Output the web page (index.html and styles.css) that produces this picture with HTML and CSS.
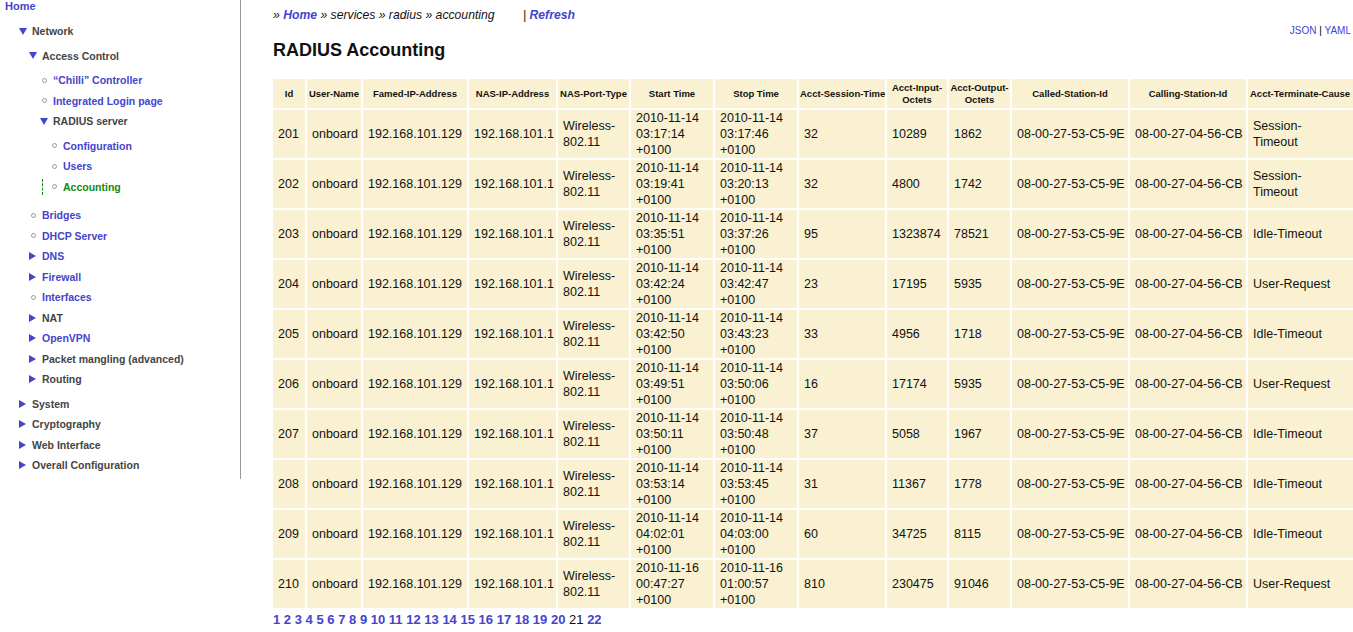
FILE: index.html
```html
<!DOCTYPE html>
<html>
<head>
<meta charset="utf-8">
<title>RADIUS Accounting</title>
<link rel="stylesheet" href="styles.css">
</head>
<body>
<div class="page">
  <nav class="sidebar">
    <a class="home" href="#">Home</a>
    <ul class="tree l1">
      <li>
        <div class="item"><span class="mk"><svg class="tri" width="8" height="7" viewBox="0 0 8 7"><polygon points="0,0 8,0 4,7"/></svg></span><span class="lbl">Network</span></div>
        <ul class="tree">
          <li>
            <div class="item"><span class="mk"><svg class="tri" width="8" height="7" viewBox="0 0 8 7"><polygon points="0,0 8,0 4,7"/></svg></span><span class="lbl">Access Control</span></div>
            <ul class="tree l3">
              <li><div class="item"><span class="mk"><span class="dot"></span></span><a href="#">“Chilli” Controller</a></div></li>
              <li><div class="item"><span class="mk"><span class="dot"></span></span><a href="#">Integrated Login page</a></div></li>
              <li>
                <div class="item"><span class="mk"><svg class="tri" width="8" height="7" viewBox="0 0 8 7"><polygon points="0,0 8,0 4,7"/></svg></span><span class="lbl">RADIUS server</span></div>
                <ul class="tree">
                  <li><div class="item"><span class="mk"><span class="dot"></span></span><a href="#">Configuration</a></div></li>
                  <li><div class="item"><span class="mk"><span class="dot"></span></span><a href="#">Users</a></div></li>
                  <li><div class="item current"><span class="mk"><span class="dot"></span></span><a href="#" class="cur">Accounting</a></div></li>
                </ul>
              </li>
            </ul>
          </li>
          <li><div class="item"><span class="mk"><span class="dot"></span></span><a href="#">Bridges</a></div></li>
          <li><div class="item"><span class="mk"><span class="dot"></span></span><a href="#">DHCP Server</a></div></li>
          <li><div class="item"><span class="mk"><svg class="tri" width="7" height="8" viewBox="0 0 7 8"><polygon points="0,0 7,4 0,8"/></svg></span><a href="#">DNS</a></div></li>
          <li><div class="item"><span class="mk"><svg class="tri" width="7" height="8" viewBox="0 0 7 8"><polygon points="0,0 7,4 0,8"/></svg></span><a href="#">Firewall</a></div></li>
          <li><div class="item"><span class="mk"><span class="dot"></span></span><a href="#">Interfaces</a></div></li>
          <li><div class="item"><span class="mk"><svg class="tri" width="7" height="8" viewBox="0 0 7 8"><polygon points="0,0 7,4 0,8"/></svg></span><span class="lbl">NAT</span></div></li>
          <li><div class="item"><span class="mk"><svg class="tri" width="7" height="8" viewBox="0 0 7 8"><polygon points="0,0 7,4 0,8"/></svg></span><a href="#">OpenVPN</a></div></li>
          <li><div class="item"><span class="mk"><svg class="tri" width="7" height="8" viewBox="0 0 7 8"><polygon points="0,0 7,4 0,8"/></svg></span><span class="lbl">Packet mangling (advanced)</span></div></li>
          <li><div class="item"><span class="mk"><svg class="tri" width="7" height="8" viewBox="0 0 7 8"><polygon points="0,0 7,4 0,8"/></svg></span><span class="lbl">Routing</span></div></li>
        </ul>
      </li>
      <li><div class="item"><span class="mk"><svg class="tri" width="7" height="8" viewBox="0 0 7 8"><polygon points="0,0 7,4 0,8"/></svg></span><span class="lbl">System</span></div></li>
      <li><div class="item"><span class="mk"><svg class="tri" width="7" height="8" viewBox="0 0 7 8"><polygon points="0,0 7,4 0,8"/></svg></span><span class="lbl">Cryptography</span></div></li>
      <li><div class="item"><span class="mk"><svg class="tri" width="7" height="8" viewBox="0 0 7 8"><polygon points="0,0 7,4 0,8"/></svg></span><span class="lbl">Web Interface</span></div></li>
      <li><div class="item"><span class="mk"><svg class="tri" width="7" height="8" viewBox="0 0 7 8"><polygon points="0,0 7,4 0,8"/></svg></span><span class="lbl">Overall Configuration</span></div></li>
    </ul>
  </nav>

  <main class="main">
    <div class="crumbs"><span class="raquo">»</span> <a href="#">Home</a> <span class="raquo">»</span> services <span class="raquo">»</span> radius <span class="raquo">»</span> accounting <span class="refresh">| <a href="#">Refresh</a></span></div>
    <div class="formats"><a href="#">JSON</a> <span class="bar">|</span> <a href="#">YAML</a></div>
    <h1 class="title">RADIUS Accounting</h1>

    <table class="acct">
      <colgroup>
        <col class="c-id"><col class="c-user"><col class="c-fip"><col class="c-nip"><col class="c-port"><col class="c-time"><col class="c-time"><col class="c-sess"><col class="c-in"><col class="c-out"><col class="c-sta"><col class="c-sta"><col class="c-cause">
      </colgroup>
      <thead>
        <tr>
          <th>Id</th><th>User-Name</th><th>Famed-IP-Address</th><th>NAS-IP-Address</th><th>NAS-Port-Type</th><th>Start Time</th><th>Stop Time</th><th>Acct-Session-Time</th><th>Acct-Input-<br>Octets</th><th>Acct-Output-<br>Octets</th><th>Called-Station-Id</th><th>Calling-Station-Id</th><th class="left">Acct-Terminate-Cause</th>
        </tr>
      </thead>
      <tbody>
        <tr><td>201</td><td>onboard</td><td>192.168.101.129</td><td>192.168.101.1</td><td>Wireless-802.11</td><td>2010-11-14 03:17:14 +0100</td><td>2010-11-14 03:17:46 +0100</td><td>32</td><td>10289</td><td>1862</td><td class="sta">08-00-27-53-C5-9E</td><td class="sta">08-00-27-04-56-CB</td><td class="cause">Session-Timeout</td></tr>
        <tr><td>202</td><td>onboard</td><td>192.168.101.129</td><td>192.168.101.1</td><td>Wireless-802.11</td><td>2010-11-14 03:19:41 +0100</td><td>2010-11-14 03:20:13 +0100</td><td>32</td><td>4800</td><td>1742</td><td class="sta">08-00-27-53-C5-9E</td><td class="sta">08-00-27-04-56-CB</td><td class="cause">Session-Timeout</td></tr>
        <tr><td>203</td><td>onboard</td><td>192.168.101.129</td><td>192.168.101.1</td><td>Wireless-802.11</td><td>2010-11-14 03:35:51 +0100</td><td>2010-11-14 03:37:26 +0100</td><td>95</td><td>1323874</td><td>78521</td><td class="sta">08-00-27-53-C5-9E</td><td class="sta">08-00-27-04-56-CB</td><td class="cause">Idle-Timeout</td></tr>
        <tr><td>204</td><td>onboard</td><td>192.168.101.129</td><td>192.168.101.1</td><td>Wireless-802.11</td><td>2010-11-14 03:42:24 +0100</td><td>2010-11-14 03:42:47 +0100</td><td>23</td><td>17195</td><td>5935</td><td class="sta">08-00-27-53-C5-9E</td><td class="sta">08-00-27-04-56-CB</td><td class="cause">User-Request</td></tr>
        <tr><td>205</td><td>onboard</td><td>192.168.101.129</td><td>192.168.101.1</td><td>Wireless-802.11</td><td>2010-11-14 03:42:50 +0100</td><td>2010-11-14 03:43:23 +0100</td><td>33</td><td>4956</td><td>1718</td><td class="sta">08-00-27-53-C5-9E</td><td class="sta">08-00-27-04-56-CB</td><td class="cause">Idle-Timeout</td></tr>
        <tr><td>206</td><td>onboard</td><td>192.168.101.129</td><td>192.168.101.1</td><td>Wireless-802.11</td><td>2010-11-14 03:49:51 +0100</td><td>2010-11-14 03:50:06 +0100</td><td>16</td><td>17174</td><td>5935</td><td class="sta">08-00-27-53-C5-9E</td><td class="sta">08-00-27-04-56-CB</td><td class="cause">User-Request</td></tr>
        <tr><td>207</td><td>onboard</td><td>192.168.101.129</td><td>192.168.101.1</td><td>Wireless-802.11</td><td>2010-11-14 03:50:11 +0100</td><td>2010-11-14 03:50:48 +0100</td><td>37</td><td>5058</td><td>1967</td><td class="sta">08-00-27-53-C5-9E</td><td class="sta">08-00-27-04-56-CB</td><td class="cause">Idle-Timeout</td></tr>
        <tr><td>208</td><td>onboard</td><td>192.168.101.129</td><td>192.168.101.1</td><td>Wireless-802.11</td><td>2010-11-14 03:53:14 +0100</td><td>2010-11-14 03:53:45 +0100</td><td>31</td><td>11367</td><td>1778</td><td class="sta">08-00-27-53-C5-9E</td><td class="sta">08-00-27-04-56-CB</td><td class="cause">Idle-Timeout</td></tr>
        <tr><td>209</td><td>onboard</td><td>192.168.101.129</td><td>192.168.101.1</td><td>Wireless-802.11</td><td>2010-11-14 04:02:01 +0100</td><td>2010-11-14 04:03:00 +0100</td><td>60</td><td>34725</td><td>8115</td><td class="sta">08-00-27-53-C5-9E</td><td class="sta">08-00-27-04-56-CB</td><td class="cause">Idle-Timeout</td></tr>
        <tr><td>210</td><td>onboard</td><td>192.168.101.129</td><td>192.168.101.1</td><td>Wireless-802.11</td><td>2010-11-16 00:47:27 +0100</td><td>2010-11-16 01:00:57 +0100</td><td>810</td><td>230475</td><td>91046</td><td class="sta">08-00-27-53-C5-9E</td><td class="sta">08-00-27-04-56-CB</td><td class="cause">User-Request</td></tr>
      </tbody>
    </table>

    <div class="pager"><a href="#">1</a> <a href="#">2</a> <a href="#">3</a> <a href="#">4</a> <a href="#">5</a> <a href="#">6</a> <a href="#">7</a> <a href="#">8</a> <a href="#">9</a> <a href="#">10</a> <a href="#">11</a> <a href="#">12</a> <a href="#">13</a> <a href="#">14</a> <a href="#">15</a> <a href="#">16</a> <a href="#">17</a> <a href="#">18</a> <a href="#">19</a> <a href="#">20</a> <span class="curpage">21</span> <a href="#">22</a></div>
  </main>
</div>
</body>
</html>
```

FILE: styles.css
```css
html, body {
  margin: 0;
  padding: 0;
  background: #fff;
  overflow: hidden;
}
body {
  font-family: "Liberation Sans", Arial, sans-serif;
  color: #111;
}
a {
  color: #4444cc;
  text-decoration: none;
}

.page {
  display: flex;
  align-items: flex-start;
}

/* ---------- sidebar ---------- */
.sidebar {
  flex: 0 0 241px;
  width: 241px;
  box-sizing: border-box;
  border-right: 1px solid #999;
  padding: 0 0 0 5px;
  font-size: 10.5px;
  font-weight: bold;
}
.home {
  display: block;
  line-height: 13px;
  font-size: 11px;
}
.tree {
  list-style: none;
  margin: 0;
  padding: 4px 0 4px 10px;
}
.tree.l1 {
  padding: 8px 0 3px 14px;
}
.tree.l3 {
  padding-left: 11px;
}
.item {
  display: flex;
  align-items: center;
  height: 20.5px;
  white-space: nowrap;
}
.item.current {
  position: relative;
}
.item.current::before {
  content: "";
  position: absolute;
  left: -8px;
  top: 2px;
  bottom: 2px;
  border-left: 1px dashed #118811;
}
.mk {
  flex: 0 0 13px;
  width: 13px;
  display: flex;
  align-items: center;
}
.tri {
  fill: #4444cc;
  display: block;
}
.dot {
  display: block;
  width: 3px;
  height: 3px;
  border: 1px solid #999;
  border-radius: 50%;
  margin-left: 2px;
}
.lbl {
  color: #444;
}
a.cur {
  color: #118811;
}

/* ---------- main ---------- */
.main {
  flex: 1 1 auto;
  min-width: 0;
  overflow: hidden;
  padding: 7px 2px 0 32px;
}
.crumbs {
  font-size: 12.2px;
  font-style: italic;
  line-height: 16px;
  white-space: nowrap;
}
.crumbs a {
  font-weight: bold;
}
.refresh {
  margin-left: 25px;
  color: #111;
}
.formats {
  text-align: right;
  font-size: 10px;
  line-height: 12px;
  margin-top: 2px;
}
.formats .bar {
  color: #000;
}
.title {
  font-size: 18px;
  line-height: 22px;
  font-weight: bold;
  margin: 2px 0 16px;
  color: #111;
}

/* ---------- table ---------- */
.acct {
  table-layout: fixed;
  width: 1089px;
  border-collapse: separate;
  border-spacing: 2px;
  margin-left: -2px;
}
.c-id { width: 32px; }
.c-user { width: 54px; }
.c-fip { width: 104px; }
.c-nip { width: 87px; }
.c-port { width: 71px; }
.c-time { width: 82px; }
.c-sess { width: 86px; }
.c-in { width: 60px; }
.c-out { width: 61px; }
.c-sta { width: 116px; }
.c-cause { width: 110px; }

.acct th,
.acct td {
  background: #f9f1d1;
  box-sizing: border-box;
}
.acct th {
  font-size: 9.5px;
  font-weight: bold;
  line-height: 12px;
  padding: 3px 1px 2px;
  text-align: center;
  vertical-align: middle;
  white-space: nowrap;
  color: #111;
}
.acct th.left {
  text-align: left;
  padding-left: 2px;
}
.acct td {
  font-size: 12.5px;
  line-height: 16px;
  height: 48px;
  padding: 0 4px 0 5px;
  vertical-align: middle;
  text-align: left;
}
.acct td.sta {
  white-space: nowrap;
}
.acct td.cause {
  padding-right: 20px;
}

.pager {
  font-size: 13px;
  font-weight: bold;
  line-height: 16px;
  padding-top: 2px;
}
.pager .curpage {
  font-weight: normal;
  color: #111;
}
```
